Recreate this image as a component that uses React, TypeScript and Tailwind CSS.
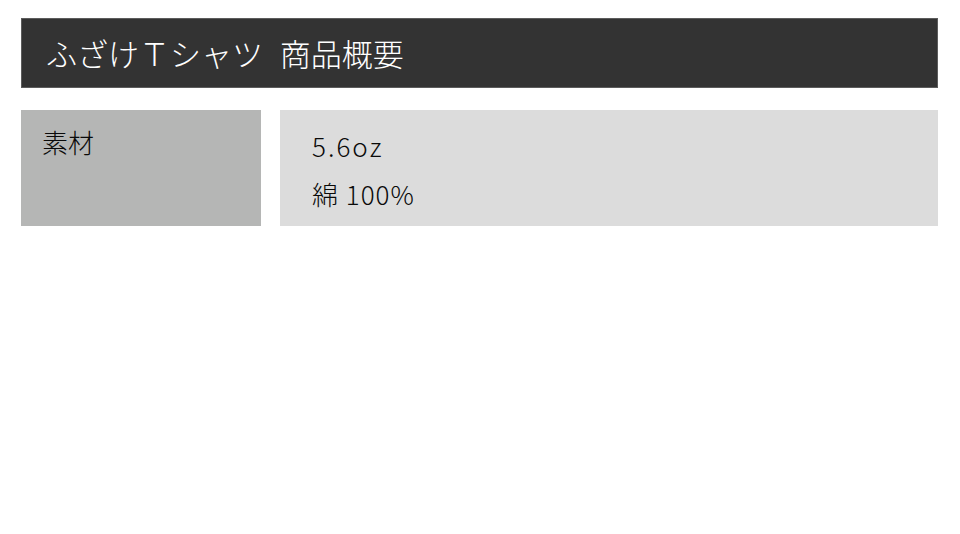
import React from "react";

export default function App() {
  const font = { fontFamily: '"Noto Sans CJK JP", "Noto Sans", sans-serif' };
  return (
    <div className="w-[960px] h-[534px] bg-white pl-[21px] pr-[22px] pt-[18px]" style={font}>
      <div className="h-[70px] bg-[#333333] border border-[#5c5c5c] flex items-center pl-[24px]">
        <h1 className="text-[31px] leading-none text-white font-light [word-spacing:10px] -mt-[2px]">ふざけＴシャツ 商品概要</h1>
      </div>
      <div className="mt-[22px] flex gap-[19px] h-[116px]">
        <div className="w-[240px] bg-[#b5b6b5] pl-[21px] pt-[14px]">
          <p className="text-[26px] leading-[36px] text-[#0a0a0a] font-light">素材</p>
        </div>
        <div className="flex-1 bg-[#dcdcdc] pl-[32px] pt-[12px]">
          <p className="text-[26px] leading-[48px] text-[#0a0a0a] font-light tracking-[2px]">5.6oz</p>
          <p className="text-[26px] leading-[48px] text-[#0a0a0a] font-light tracking-[1px]">綿 100%</p>
        </div>
      </div>
    </div>
  );
}
